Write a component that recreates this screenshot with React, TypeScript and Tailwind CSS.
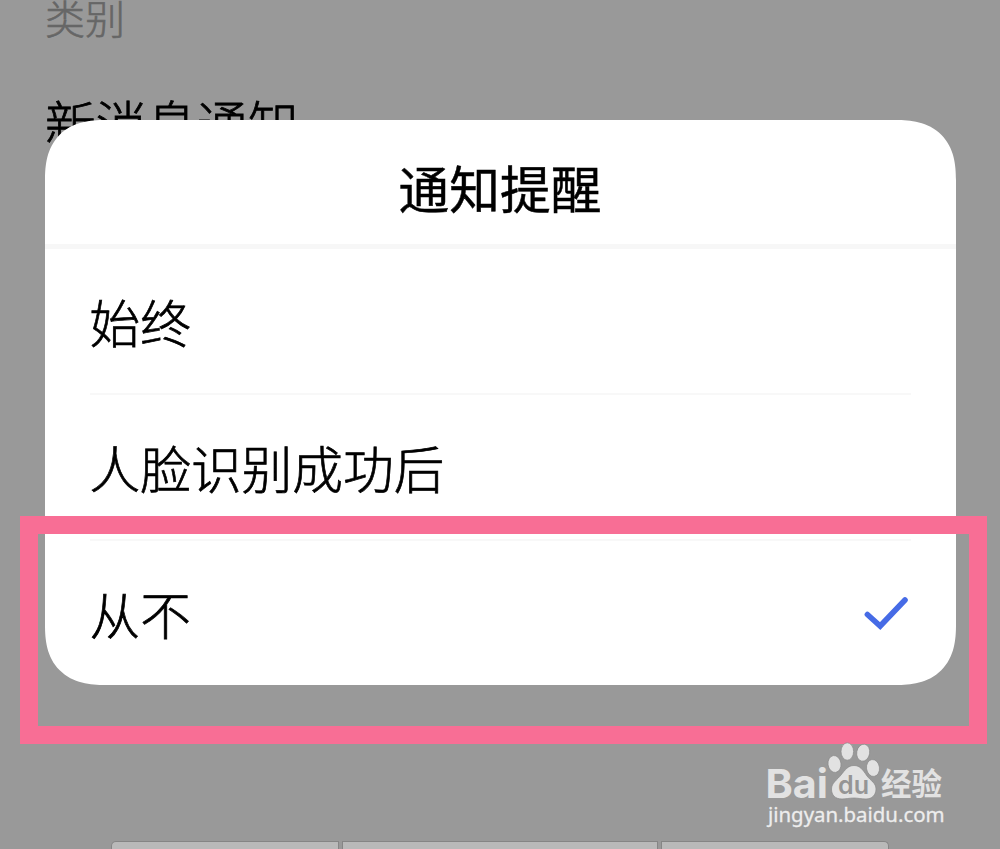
const options = [
  { label: '始终', selected: false },
  { label: '人脸识别成功后', selected: false },
  { label: '从不', selected: true },
];

function Check() {
  return (
    <svg className="mr-[3px] h-[34px] w-[44px]" viewBox="0 0 44 34" fill="none" stroke="#466be6" strokeWidth="5.6" strokeLinecap="round">
      <path d="M3.4 18.5 L16.2 30 L41 4" />
    </svg>
  );
}

function Dialog() {
  return (
    <section className="flex h-[565px] w-[911px] flex-col overflow-hidden rounded-[60px] bg-white text-black [corner-shape:superellipse(1.3)]">
      <h1 className="flex h-[129px] shrink-0 items-center justify-center border-b-[5px] border-[#f7f7f7] pt-[11px] text-[50.7px] leading-none font-normal [-webkit-text-stroke:0.5px_black]">
        通知提醒
      </h1>
      <ul className="flex flex-1 flex-col px-[45px]">
        {options.map((o) => (
          <li key={o.label} className="flex h-[146px] shrink-0 items-center justify-between border-b-2 border-[#f8f8f8] text-[50.7px] leading-none font-light last:h-[144px] last:border-b-0">
            <span className="[-webkit-text-stroke:0.7px_black]">{o.label}</span>
            {o.selected && <Check />}
          </li>
        ))}
      </ul>
    </section>
  );
}

function Watermark() {
  return (
    <div className="flex w-[190px] flex-col text-[#e2e2e2]">
      <svg className="h-[60px] w-[182px] overflow-visible" viewBox="765 740 182 60" fill="currentColor">
        <g stroke="#888888" strokeWidth="0.7">
          <ellipse cx="834.5" cy="764" rx="6.5" ry="8.5" transform="rotate(-8 834.5 764)" />
          <ellipse cx="847.3" cy="751.5" rx="6.3" ry="8.7" />
          <ellipse cx="863.2" cy="752.7" rx="6.5" ry="8.6" transform="rotate(10 863.2 752.7)" />
          <ellipse cx="873" cy="768" rx="6.5" ry="8.5" transform="rotate(-8 873 768)" />
          <path d="M854 765.5 C860 765.5 863 770 867 776 C871 781 876 783 876 789 C876 795 872 799 866 799 C861 799 858 798 854 798 C849 798 846 799 842 799 C835 799 831.5 795 831.5 789 C831.5 783 837 780 841 775 C845 770 848 765.5 854 765.5 Z" />
        </g>
        <text x="765.5" y="797.5" fontSize="39.5" fontWeight="700" fontFamily="Inter, 'Liberation Sans', sans-serif" textLength="62.5" lengthAdjust="spacingAndGlyphs">Bai</text>
        <text x="838" y="793.5" fontSize="25" fontWeight="600" fontFamily="Inter, 'Liberation Sans', sans-serif" fill="#959595" textLength="31" lengthAdjust="spacingAndGlyphs">du</text>
        <text x="881" y="794.5" fontSize="31" fontWeight="700" fontFamily="'Noto Sans CJK SC', sans-serif" textLength="61" lengthAdjust="spacingAndGlyphs">经验</text>
      </svg>
      <span className="pl-[3px] font-['Noto_Sans',sans-serif] text-[20.4px] leading-[28px] text-[#ededed] [-webkit-text-stroke:0.3px_#ededed]">
        jingyan.baidu.com
      </span>
    </div>
  );
}

export default function App() {
  return (
    <main className="relative flex h-[849px] w-[1000px] flex-col overflow-hidden bg-[#999999] font-['Noto_Sans_CJK_SC',sans-serif]">
      <p className="pl-[45px] text-[40px] leading-[35px] font-light text-[#666666] [-webkit-text-stroke:0.6px_#666666]">类别</p>
      <p className="mt-[62px] pl-[45px] text-[50.7px] leading-[50px] font-light text-black [-webkit-text-stroke:0.8px_black]">新消息通知</p>
      <div className="mt-auto flex h-[8px] justify-center gap-[3px]">
        <div className="w-[228px] rounded-tl-[5px] border border-b-0 border-[#858585] bg-[#b9b9b9]" />
        <div className="w-[316px] border border-b-0 border-[#858585] bg-[#b9b9b9]" />
        <div className="w-[228px] rounded-tr-[5px] border border-b-0 border-[#858585] bg-[#b9b9b9]" />
      </div>
      <div className="absolute top-[120px] left-[44.5px]">
        <Dialog />
      </div>
      <div className="absolute top-[516px] left-[20px] h-[228px] w-[967px] border-[18px] border-[#f86e95]" />
      <div className="absolute top-[740px] left-[765px]">
        <Watermark />
      </div>
    </main>
  );
}
